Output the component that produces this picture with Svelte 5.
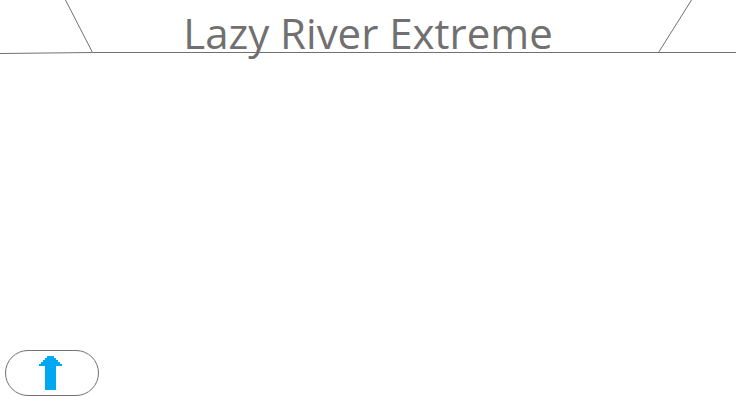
<script>
  const title = 'Lazy River Extreme';
</script>

<div class="screen">
  <header>
    <div class="frame" aria-hidden="true">
      <svg width="93" height="55" viewBox="0 0 93 55">
        <path d="M0 53.5 L92.5 52.5" />
        <path d="M65.5 0 L92.5 52.5" />
      </svg>
      <span class="rule"></span>
      <svg width="78" height="55" viewBox="0 0 78 55">
        <path d="M0 52.5 H78" />
        <path d="M0.5 52.5 L33.5 0" />
      </svg>
    </div>
    <h1>{title}</h1>
  </header>

  <main></main>

  <footer>
    <button type="button" aria-label="Up">
      <svg width="23" height="34" viewBox="0 0 23 34" shape-rendering="crispEdges">
        <path
          class="arrow"
          d="M8 0H15V2H17V4H19V6H21V8H23V10H17V34H6V10H0V8H2V6H4V4H6V2H8Z"
        />
      </svg>
    </button>
  </footer>
</div>

<style>
  :global(body) {
    margin: 0;
    background: #fff;
  }

  .screen {
    display: flex;
    flex-direction: column;
    min-height: 100vh;
    box-sizing: border-box;
    padding-bottom: 18px;
    color: #707070;
    font-family: 'Open Sans', 'Noto Sans', sans-serif;
  }

  header {
    display: grid;
  }

  .frame,
  h1 {
    grid-area: 1 / 1;
  }

  .frame {
    display: flex;
    align-items: flex-start;
  }

  .frame svg {
    flex: none;
  }

  .frame path {
    fill: none;
    stroke: #707070;
    stroke-width: 1;
  }

  .rule {
    flex: 1;
    height: 52px;
    border-bottom: 1px solid #707070;
  }

  h1 {
    margin: 0;
    font-size: 42px;
    line-height: 66px;
    font-weight: 400;
    text-align: center;
    white-space: nowrap;
  }

  main {
    flex: 1;
  }

  footer {
    display: flex;
    padding-left: 5px;
  }

  button {
    display: flex;
    align-items: flex-start;
    justify-content: center;
    box-sizing: border-box;
    width: 94px;
    height: 46px;
    padding: 5px 3px 0 0;
    border: 1px solid #707070;
    border-radius: 23px;
    background: #fff;
    cursor: pointer;
  }

  .arrow {
    fill: #00a8f3;
  }
</style>
